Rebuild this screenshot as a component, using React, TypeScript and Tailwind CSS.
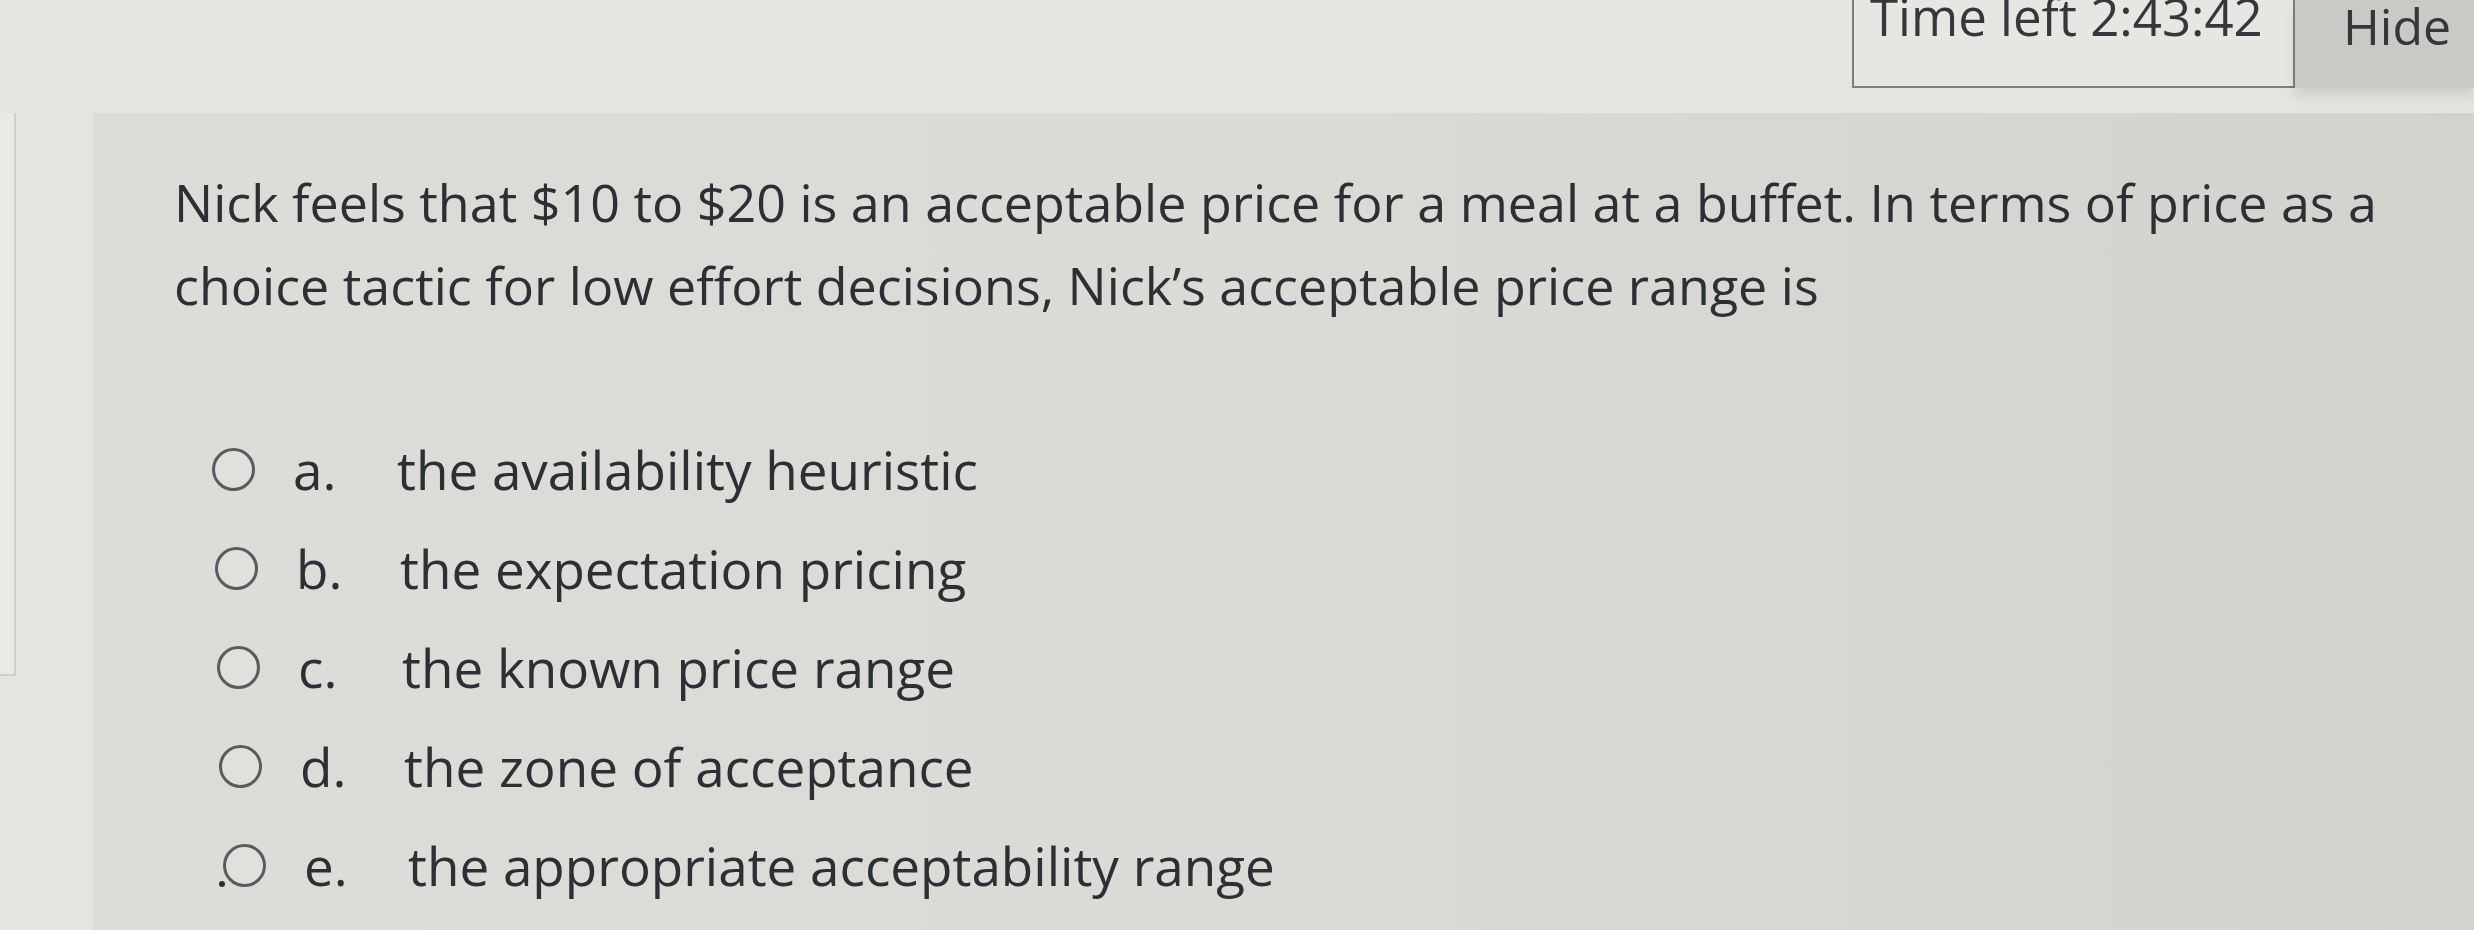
import React from "react";

const options = [
  { key: "a.", text: "the availability heuristic", shift: "ml-[0px]" },
  { key: "b.", text: "the expectation pricing", shift: "ml-[3px]" },
  { key: "c.", text: "the known price range", shift: "ml-[5px]" },
  { key: "d.", text: "the zone of acceptance", shift: "ml-[7px]" },
  { key: "e.", text: "the appropriate acceptability range", shift: "ml-[11px]" },
];

export default function App() {
  return (
    <div className="w-[2474px] h-[930px] overflow-hidden bg-[#e4e4e0] flex flex-col font-['Open_Sans','Noto_Sans',sans-serif] text-[#2c2f33]">
      <header className="h-[113px] shrink-0 flex justify-end items-start">
        <div className="w-[443px] h-[88px] border-2 border-t-0 border-[#857c76] bg-[#e7e6e2] pl-[16px] overflow-hidden">
          <div className="-mt-[9px] text-[51px] leading-[51px] text-[#35373a] whitespace-nowrap">
            Time left 2:43:42
          </div>
        </div>
        <div className="w-[179px] h-[88px] bg-[#c9c9c5] pl-[48px] pt-[1px] shadow-[0_8px_12px_rgba(0,0,0,0.10)]">
          <div className="text-[50px] leading-[50px] text-[#35373a]">Hide</div>
        </div>
      </header>

      <div className="flex flex-1">
        <div className="w-[93px] shrink-0 flex items-start">
          <div className="w-[16px] h-[563px] bg-[#e9e9e6] border-r-2 border-b-2 border-[#cdcdc9]" />
        </div>

        <main className="flex-1 bg-gradient-to-r from-[#dcddd9] via-[#dadbd7] to-[#d2d3cf] pl-[81px] pt-[47px]">
          <p className="w-[2230px] text-[52px] leading-[83px]">
            Nick feels that $10 to $20 is an acceptable price for a meal at a buffet. In terms of price as a
            choice tactic for low effort decisions, Nick’s acceptable price range is
          </p>

          <div className="mt-[94px] pl-[38px] flex flex-col">
            {options.map((o, i) => (
              <div key={o.key} className={`h-[99px] flex items-center ${o.shift}`}>
                <div className="relative w-[43px] h-[43px] shrink-0 rounded-full border-[3px] border-[#595b5e] bg-[#e0e1dd]">
                  {i === 4 && (
                    <span className="absolute left-[-7px] bottom-[-3px] w-[6px] h-[6px] rounded-full bg-[#2c2e30]" />
                  )}
                </div>
                <span className="ml-[38px] w-[104px] shrink-0 text-[53px] leading-[99px]">{o.key}</span>
                <span className="text-[53px] leading-[99px] whitespace-nowrap">{o.text}</span>
              </div>
            ))}
          </div>
        </main>
      </div>
    </div>
  );
}
